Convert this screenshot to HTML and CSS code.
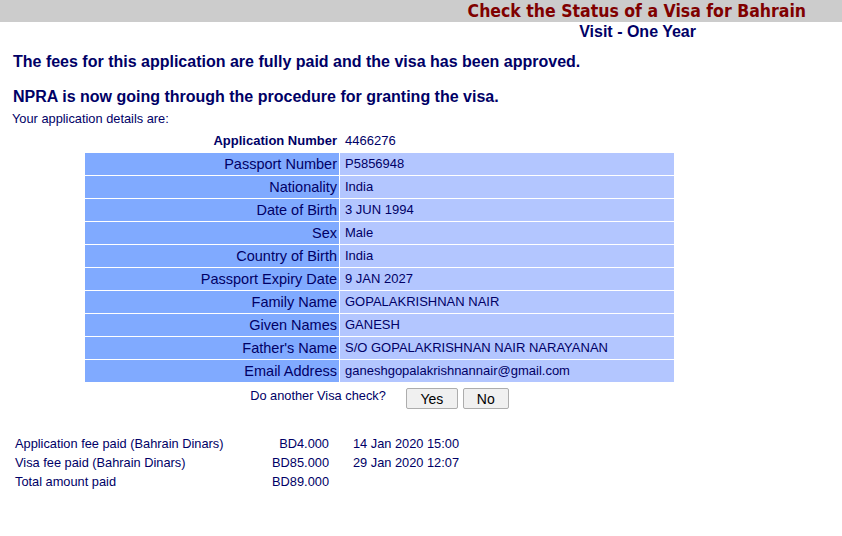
FILE: index.html
```html
<!DOCTYPE html>
<html>
<head>
<meta charset="utf-8">
<link rel="stylesheet" href="styles.css">
</head>
<body>
<div class="topbar"><div class="title">Check the Status of a Visa for Bahrain</div></div>
<div class="subtitle">Visit - One Year</div>
<h2 class="msg msg1">The fees for this application are fully paid and the visa has been approved.</h2>
<h2 class="msg msg2">NPRA is now going through the procedure for granting the visa.</h2>
<div class="intro">Your application details are:</div>
<table class="details">
<tr class="plain"><td class="lbl strong">Application Number</td><td class="val">4466276</td></tr>
<tr><td class="lbl">Passport Number</td><td class="val">P5856948</td></tr>
<tr><td class="lbl">Nationality</td><td class="val">India</td></tr>
<tr><td class="lbl">Date of Birth</td><td class="val">3 JUN 1994</td></tr>
<tr><td class="lbl">Sex</td><td class="val">Male</td></tr>
<tr><td class="lbl">Country of Birth</td><td class="val">India</td></tr>
<tr><td class="lbl">Passport Expiry Date</td><td class="val">9 JAN 2027</td></tr>
<tr><td class="lbl">Family Name</td><td class="val">GOPALAKRISHNAN NAIR</td></tr>
<tr><td class="lbl">Given Names</td><td class="val">GANESH</td></tr>
<tr><td class="lbl">Father's Name</td><td class="val">S/O GOPALAKRISHNAN NAIR NARAYANAN</td></tr>
<tr><td class="lbl">Email Address</td><td class="val">ganeshgopalakrishnannair@gmail.com</td></tr>
</table>
<div class="again">
<span class="again-q">Do another Visa check?</span>
<button class="btn btn-yes">Yes</button>
<button class="btn btn-no">No</button>
</div>
<div class="fees">
<div class="fee-row"><span class="fee-l">Application fee paid (Bahrain Dinars)</span><span class="fee-a">BD4.000</span><span class="fee-d">14 Jan 2020 15:00</span></div>
<div class="fee-row"><span class="fee-l">Visa fee paid (Bahrain Dinars)</span><span class="fee-a">BD85.000</span><span class="fee-d">29 Jan 2020 12:07</span></div>
<div class="fee-row"><span class="fee-l">Total amount paid</span><span class="fee-a">BD89.000</span><span class="fee-d"></span></div>
</div>
</body>
</html>
```
FILE: styles.css
```css
html, body {
  margin: 0;
  padding: 0;
  background: #ffffff;
  font-family: "Liberation Sans", Arial, sans-serif;
  color: #000066;
}
.topbar {
  background: #cccccc;
  height: 22px;
  display: flex;
  justify-content: flex-end;
  align-items: center;
  padding-right: 36px;
}
.title {
  font-family: "DejaVu Sans Condensed", "DejaVu Sans", sans-serif;
  font-weight: bold;
  font-size: 17.5px;
  color: #800000;
  line-height: 22px;
}
.subtitle {
  font-weight: bold;
  font-size: 16px;
  text-align: right;
  padding-right: 146px;
  line-height: 18px;
  margin-top: 1px;
}
.msg {
  font-size: 16px;
  font-weight: bold;
  margin: 0;
  padding-left: 13px;
  line-height: 19px;
}
.msg1 { margin-top: 11px; }
.msg2 { margin-top: 16px; }
.intro {
  font-size: 12.8px;
  padding-left: 12px;
  margin-top: 5px;
  line-height: 15px;
}
.details {
  margin-left: 84px;
  margin-top: 3px;
  width: 591px;
  border-spacing: 1px;
  font-size: 13px;
}
.details td {
  height: 22px;
  padding: 0;
  line-height: 16px;
}
.details .lbl {
  width: 252px;
  text-align: right;
  background: #80aaff;
  padding-right: 2px;
  font-size: 14.5px;
}
.details .val {
  background: #b3c6ff;
  padding-left: 5px;
}
.details .plain td { background: transparent; }
.details .lbl.strong { font-weight: bold; font-size: 13px; }
.again {
  width: 591px;
  margin-left: 84px;
  display: flex;
  justify-content: center;
  align-items: flex-start;
  font-size: 12.8px;
  margin-top: 3px;
}
.again-q { margin-right: 20px; padding-top: 2px; line-height: 15px; }
.btn {
  font-family: "Liberation Sans", Arial, sans-serif;
  font-size: 14px;
  color: #000000;
  background: #f0f0f0;
  border: 1px solid #adadad;
  border-radius: 2px;
  height: 21px;
  padding: 0;
  margin-top: 2px;
}
.btn-yes { width: 52px; margin-right: 5px; }
.btn-no { width: 46px; }
.fees {
  margin-top: 25px;
  padding-left: 15px;
  font-size: 12.8px;
}
.fee-row {
  display: flex;
  line-height: 19px;
}
.fee-l { width: 238px; }
.fee-a { width: 76px; text-align: right; }
.fee-d { margin-left: 24px; }
```
